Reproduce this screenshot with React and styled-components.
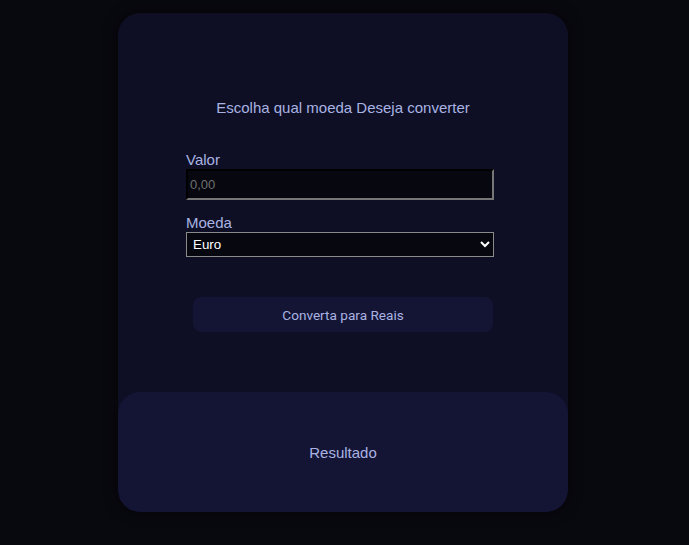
import React from "react";
import styled, { createGlobalStyle } from "styled-components";

const Global = createGlobalStyle`
  html, body { margin: 0; padding: 0; background: #08080f; }
  body { font-family: "Liberation Sans", Arial, sans-serif; }
  * { box-sizing: border-box; }
`;

const Page = styled.div`
  width: 689px;
  height: 545px;
  background: #08080f;
  display: flex;
  justify-content: flex-start;
  padding: 13px 0 0 118px;
`;

const Card = styled.div`
  width: 450px;
  height: 499px;
  background: #0e0f24;
  border-radius: 22px;
  box-shadow: 0 0 14px rgba(0, 0, 0, 0.6);
  display: flex;
  flex-direction: column;
  align-items: center;
  overflow: hidden;
`;

const Title = styled.h2`
  margin: 86px 0 0;
  font-size: 15px;
  font-weight: normal;
  color: #a9b3e3;
  line-height: 17px;
`;

const Form = styled.div`
  width: 308px;
  margin: 35px 0 0 -6px;
  display: flex;
  flex-direction: column;
`;

const Label = styled.label`
  font-size: 15px;
  color: #a9b3e3;
  line-height: 17px;
  margin-top: ${(p) => p.$mt || 0}px;
`;

const Input = styled.input`
  width: 308px;
  height: 31px;
  margin-top: 1px;
  background: #07070f;
  border: 2px inset #767676;
  border-top-color: #1c1c1c;
  border-left-color: #1c1c1c;
  color: #ddd;
  font-family: "Liberation Sans", Arial, sans-serif;
  font-size: 13px;
  padding: 0 2px;
  &::placeholder { color: #6f6f6f; }
`;

const Select = styled.select`
  width: 308px;
  height: 25px;
  margin-top: 1px;
  background: #07070f;
  border: 1px solid #8a8a8a;
  border-radius: 0;
  color: #fff;
  font-family: "Liberation Sans", Arial, sans-serif;
  font-size: 13.33px;
  padding: 0 2px;
`;

const Button = styled.button`
  width: 300px;
  height: 35px;
  margin: 40px 0 0;
  background: #141534;
  border: none;
  border-radius: 8px;
  color: #a9b3e3;
  font-family: Roboto, "Liberation Sans", sans-serif;
  font-size: 13.6px;
  cursor: pointer;
`;

const Result = styled.div`
  margin-top: auto;
  width: 100%;
  height: 120px;
  background: #141534;
  border-radius: 22px;
  display: flex;
  align-items: center;
  justify-content: center;
  color: #a9b3e3;
  font-size: 15px;
`;

export default function App() {
  return (
    <>
      <Global />
      <Page>
        <Card>
          <Title>Escolha qual moeda Deseja converter</Title>
          <Form>
            <Label>Valor</Label>
            <Input placeholder="0,00" />
            <Label $mt={14}>Moeda</Label>
            <Select defaultValue="euro">
              <option value="euro">Euro</option>
              <option value="dolar">Dólar</option>
            </Select>
          </Form>
          <Button>Converta para Reais</Button>
          <Result>Resultado</Result>
        </Card>
      </Page>
    </>
  );
}
